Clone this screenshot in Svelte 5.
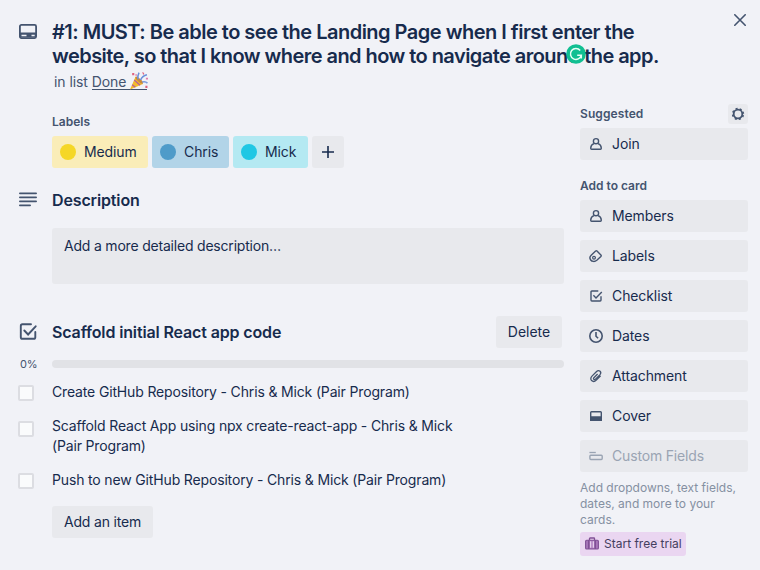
<script>
  const labels = [
    { name: 'Medium', cls: 'yellow' },
    { name: 'Chris', cls: 'blue' },
    { name: 'Mick', cls: 'sky' }
  ];
  const actions = [
    { name: 'Members', icon: 'person' },
    { name: 'Labels', icon: 'tag' },
    { name: 'Checklist', icon: 'check' },
    { name: 'Dates', icon: 'clock' },
    { name: 'Attachment', icon: 'clip' },
    { name: 'Cover', icon: 'cover' },
    { name: 'Custom Fields', icon: 'fields', disabled: true }
  ];
  const items = [
    'Create GitHub Repository - Chris & Mick (Pair Program)',
    'Scaffold React App using npx create-react-app - Chris & Mick (Pair Program)',
    'Push to new GitHub Repository - Chris & Mick (Pair Program)'
  ];
</script>

{#snippet icon(kind)}
  <svg class="ico" viewBox="0 0 16 16" width="16" height="16" fill="none" stroke="currentColor" stroke-width="1.4">
    {#if kind === 'person'}
      <circle cx="8" cy="5.2" r="2.6" />
      <path d="M5.9 7.6C3.8 8.4 2.7 10.2 2.7 12.3c0 .6.3.9.9.9h8.800c.6 0 .9-.3.9-.9 0-2.100-1.100-3.900-3.200-4.700" />
    {:else if kind === 'tag'}
      <path d="M7.6 3.1Q8.3 2.4 9 3.1L12.9 7q.7.7 0 1.4L8.8 12.3C6.8 14 3.9 13.7 2.7 12 1.5 10.4 1.9 8.5 3.2 7.3Z" stroke-width="1.4" />
      <circle cx="6" cy="9.7" r="1.4" stroke-width="1.2" />
    {:else if kind === 'check'}
      <path d="M10.300 3H3.900q-.9 0-.9.9v8.200q0 .9.9.9h8.200q.9 0 .9-.9V8.300M5.400 7.300l2.600 2.600 5.800-6" stroke-width="1.4" />
    {:else if kind === 'clock'}
      <circle cx="8" cy="8" r="6.2" stroke-width="1.6" />
      <path d="M8 3.9v4.300l2.100 2.100" stroke-width="1.6" />
    {:else if kind === 'clip'}
      <path d="M12.600 7.700l-4.300 4.400c-1.500 1.500-3.500 1.600-4.700.5-1.200-1.200-1-3.100.4-4.500l4.600-4.600c1-1 2.500-1 3.500-.2.9 1 .8 2.300-.1 3.300l-4.500 4.500c-.6.6-1.300.6-1.700.1-.4-.4-.4-1 .1-1.500l3.700-3.700" stroke-width="1.3" />
    {:else if kind === 'cover'}
      <rect x="2.7" y="3.7" width="10.6" height="8.6" rx=".8" />
      <path d="M2.7 9h10.6v3.3H2.7z" fill="currentColor" />
    {:else if kind === 'fields'}
      <path d="M1.4 4.5h6.4" stroke-width="1.3" />
      <rect x="1.9" y="7.3" width="12.3" height="4.2" rx=".9" stroke-width="1.4" />
    {/if}
  </svg>
{/snippet}

<div class="card">
  <main>
    <header class="row head">
      <svg class="lead" viewBox="0 0 24 24" width="24" height="24" fill="none" stroke="currentColor" stroke-width="1.8">
        <path d="M4 12.500h16v5H4z" fill="currentColor" stroke="none" />
        <rect x="3.9" y="4.9" width="16.2" height="13.200" rx="1.5" />
        <path d="M5.500 15.500h5M15.500 15.500h3.200" stroke="#f1f2f7" stroke-width="1.400" />
      </svg>
      <div>
        <h1><span class="t1">#1: MUST: Be able to see the Landing Page when I first enter the</span><br /><span class="t2">website, so that I know where and how to navigate around the app.
          <svg class="gram" viewBox="0 0 20 20" width="20" height="20">
            <circle cx="10" cy="10" r="9.8" fill="#11bf92" />
            <path d="M14.2 6.400A5.500 5.500 0 1 0 15.300 11.200H11.200M15.300 11.200v3.300" fill="none" stroke="#e6fff5" stroke-width="1.5" />
          </svg></span></h1>
        <p class="inlist">in list <span class="done">Done <svg class="party" viewBox="0 0 18 18" width="19" height="19">
          <path d="M1 17.5L6.2 5.500q5 1.800 7 6.700z" fill="#f3b92d" />
          <path d="M3 13l3 2.500M5 8.500l5.500 5" stroke="#b4609b" stroke-width="1.2" />
          <ellipse cx="9.7" cy="8.7" rx="4.7" ry="1.500" transform="rotate(43 9.7 8.7)" fill="#c98a3c" />
          <path d="M8.500 8q-.4-4 1-6.500M11 8.500q1.500-4 6-5" fill="none" stroke="#6c91da" stroke-width="1.5" />
          <path d="M12.500 10.500q3-1 5 1" fill="none" stroke="#7b9bdc" stroke-width="1.5" />
          <path d="M3 2h2v2H3zM12.500 1l2 1-1 2zM15.500 14h2v2h-2z" fill="#df647f" />
          <path d="M6 3h1.500v1.500H6zM16 6.500h2V8h-2z" fill="#df7fae" />
        </svg></span></p>
      </div>
    </header>

    <section class="labels">
      <h3>Labels</h3>
      <div class="chips">
        {#each labels as l}
          <span class="chip {l.cls}"><i></i>{l.name}</span>
        {/each}
        <button class="plus" aria-label="Add label"><svg viewBox="0 0 12 12" width="12" height="12" stroke="currentColor" stroke-width="1.6"><path d="M6 0v12M0 6h12" /></svg></button>
      </div>
    </section>

    <section class="row desc">
      <svg class="lead" viewBox="0 0 24 24" width="24" height="24" fill="none" stroke="currentColor" stroke-width="1.8" stroke-linecap="round">
        <path d="M3.900 5.300h16.200M3.900 9.300h16.200M3.900 13.300h16.200M3.900 17.300h10.200" />
      </svg>
      <h2 class="dh">Description</h2>
    </section>
    <div class="box">Add a more detailed description…</div>

    <section class="row list">
      <svg class="lead" viewBox="0 0 24 24" width="24" height="24" fill="none" stroke="currentColor" stroke-width="1.9" stroke-linecap="round">
        <path d="M15 4.300H6.400q-1.600 0-1.600 1.600v11.300q0 1.600 1.600 1.600h11.300q1.600 0 1.600-1.600V12M8.300 10.500l3.800 4 7.600-8.200" />
      </svg>
      <h2 class="lh">Scaffold initial React app code</h2>
      <button class="btn del">Delete</button>
    </section>
    <div class="progress"><span>0%</span><div class="bar"></div></div>
    <ul>
      {#each items as item, i}
        <li><span class="cb" class:tall={i === 1}></span><p>{item}</p></li>
      {/each}
    </ul>
    <button class="btn add">Add an item</button>
  </main>

  <aside>
    <div class="sughead">
      <h3 class="sg">Suggested</h3>
      <span class="gear"><svg viewBox="0 0 16 16" width="16" height="16" fill="none" stroke="currentColor">
        <circle cx="8" cy="8" r="4.3" stroke-width="1.8" />
        <circle cx="8" cy="8" r="5.4" stroke-width="1.5" stroke-dasharray="2.100 2.141" stroke-dashoffset="-1.070" />
      </svg></span>
    </div>
    <button class="side">{@render icon('person')}<span>Join</span></button>
    <h3 class="ah">Add to card</h3>
    <div class="stack">
      {#each actions as a}
        <button class="side" class:off={a.disabled}>{@render icon(a.icon)}<span>{a.name}</span></button>
      {/each}
    </div>
    <p class="promo">Add dropdowns, text fields, dates, and more to your cards.</p>
    <button class="trial">
      <svg viewBox="0 0 16 16" width="16" height="16" fill="none" stroke="#805095">
        <path d="M5.500 4V2.600q0-.6.6-.6h3.800q.6 0 .6.6V4" stroke-width="1.3" />
        <rect x="1.6" y="4.3" width="12.8" height="8.7" rx="1" fill="#a977bb" stroke-width="1.1" />
        <path d="M4.700 4v9M11.300 4v9" stroke-width="1.5" />
        <path d="M6.700 5.200v6.500M9.300 5.200v6.500" stroke="#ead6f1" stroke-width="1.2" />
      </svg><span>Start free trial</span>
    </button>
  </aside>

  <svg class="close" viewBox="0 0 12 12" width="12" height="12" stroke="currentColor" stroke-width="1.6" stroke-linecap="round"><path d="M.8.8l10.400 10.400M11.200.8L.8 11.200" /></svg>
</div>

<style>
  :global(body) { background: #f1f2f7; }
  .card { position: relative; display: flex; gap: 16px; width: 760px; height: 570px; box-sizing: border-box; padding: 20px 12px 0 16px; background: #f1f2f7; color: #172b4d; font: 14px/20px Inter, "Liberation Sans", sans-serif; overflow: hidden; }
  h1, h2, h3, p, ul { margin: 0; padding: 0; }
  button { border: 0; margin: 0; padding: 0; font: inherit; color: inherit; text-align: left; }
  svg { display: block; flex: none; }
  main { width: 548px; flex: none; }
  .row { display: flex; gap: 12px; }
  .lead { color: #44546f; }
  h1 { font-size: 20px; line-height: 24px; font-weight: 600; white-space: nowrap; height: 48px; }
  .t1 { letter-spacing: -.51px; }
  .t2 { letter-spacing: -.55px; position: relative; }
  .gram { position: absolute; left: 514px; top: 0; }
  .inlist { padding: 4px 0 0 2px; color: #44546f; height: 20px; white-space: nowrap; letter-spacing: -.07px; }
  .done { display: inline-flex; border-bottom: 1px solid #44546f; height: 17px; white-space: pre; }
  .party { margin: -1px -1px 0 -1px; }
  h3 { font-size: 12px; line-height: 20px; font-weight: 600; color: #44546f; }
  .sg { letter-spacing: .1px; }
  .labels { padding: 20px 0 0 36px; }
  .labels h3 { margin-bottom: 4px; }
  .chips { display: flex; gap: 4px; }
  .chip { display: flex; align-items: center; height: 32px; box-sizing: border-box; padding-left: 8px; gap: 8px; border-radius: 3px; letter-spacing: -.1px; }
  .chip i { width: 16px; height: 16px; border-radius: 50%; }
  .yellow { width: 96px; background: #faedb8; } .yellow i { background: #f5d727; }
  .blue { width: 77px; background: #b2d4e8; } .blue i { background: #4f9bc9; }
  .sky { width: 75px; background: #b4e9f2; } .sky i { background: #20c7e4; }
  .plus { width: 32px; height: 32px; border-radius: 3px; background: #e8e9ed; display: flex; align-items: center; justify-content: center; }
  .desc { margin-top: 20px; height: 24px; }
  h2 { font-size: 16px; line-height: 24px; font-weight: 600; white-space: nowrap; letter-spacing: -.14px; }
  .box { margin: 16px 0 0 36px; height: 56px; box-sizing: border-box; padding: 8px 12px; border-radius: 3px; background: #e8e9ed; letter-spacing: -.2px; }
  .list { margin-top: 32px; height: 32px; align-items: center; }
  .btn { height: 32px; border-radius: 3px; background: #e8e9ed; text-align: center; white-space: nowrap; }
  .del { width: 66px; margin: 0 2px 0 auto; }
  .progress { display: flex; align-items: center; height: 20px; margin-top: 6px; }
  .progress span { width: 36px; box-sizing: border-box; padding-left: 4px; font-size: 11px; letter-spacing: -.2px; color: #44546f; }
  .bar { flex: 1; height: 8px; border-radius: 4px; background: #e1e2e6; }
  ul { list-style: none; display: flex; flex-direction: column; gap: 14px; margin-top: 8px; }
  li { display: flex; }
  li p { width: 420px; letter-spacing: -.155px; }
  .cb { flex: none; width: 16px; height: 16px; box-sizing: border-box; border: 2px solid #dcdde2; border-radius: 2px; background: #fafbfc; margin: 3px 18px 0 2px; }
  .tall { margin-top: 5px; }
  .add { width: 101px; margin: 16px 0 0 36px; letter-spacing: -.18px; }
  aside { width: 168px; padding-top: 84px; flex: none; }
  .sughead { display: flex; justify-content: space-between; height: 24px; }
  .gear { width: 20px; height: 20px; border-radius: 3px; background: #e8e9ed; display: flex; align-items: center; justify-content: center; color: #44546f; }
  .ah { margin: 16px 0 4px; }
  .side { width: 168px; height: 32px; border-radius: 3px; background: #e8e9ed; display: flex; align-items: center; gap: 8px; padding-left: 8px; white-space: nowrap; letter-spacing: -.1px; }
  .ico { color: #44546f; }
  .off, .off .ico { color: #9aa4b3; }
  .off { letter-spacing: -.17px; }
  .stack { display: flex; flex-direction: column; gap: 8px; }
  .promo { font-size: 12px; line-height: 16px; color: #8590a2; margin: 8px 0 4px; }
  .trial { width: 106px; height: 24px; border-radius: 3px; background: #ead6f1; display: flex; align-items: center; gap: 4px; padding-left: 4px; font-size: 12px; color: #44405f; white-space: nowrap; }
  .close { position: absolute; left: 734px; top: 14px; color: #44546f; }
</style>
